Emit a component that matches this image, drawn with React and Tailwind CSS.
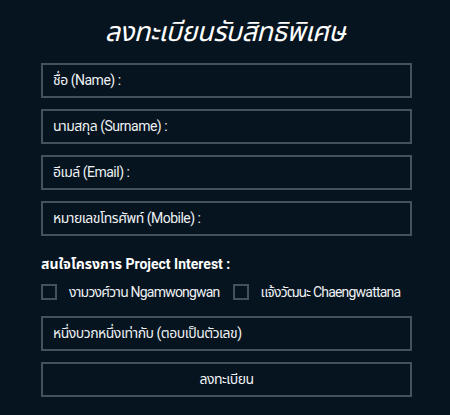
import React from 'react';

const fields = [
  'ชื่อ (Name) :',
  'นามสกุล (Surname) :',
  'อีเมล์ (Email) :',
  'หมายเลขโทรศัพท์ (Mobile) :',
];

const Box = ({ children, className = '' }) => (
  <div className={`h-[35px] border-2 border-[#43525c] flex items-center px-[10px] text-[14px] tracking-[-0.5px] text-[#eef1f3] ${className}`}>
    {children}
  </div>
);

const Check = ({ label }) => (
  <label className="flex items-center whitespace-nowrap shrink-0">
    <span className="w-4 h-4 border-2 border-[#43525c]" />
    <span className="ml-3 text-[14px] tracking-[-0.8px] text-[#eef1f3]">{label}</span>
  </label>
);

export default function App() {
  return (
    <div
      className="w-[450px] h-[415px] bg-[#061420] overflow-hidden"
      style={{ fontFamily: 'Roboto, "Noto Sans Thai", "Noto Sans", sans-serif' }}
    >
      <h1 className="pt-[14px] h-[63px] text-center text-[27px] italic text-white leading-[36px] tracking-[-0.5px]">
        ลงทะเบียนรับสิทธิพิเศษ
      </h1>
      <div className="ml-[41px] w-[371px] flex flex-col">
        <div className="flex flex-col gap-[11px]">
          {fields.map((f) => (
            <Box key={f}>{f}</Box>
          ))}
        </div>
        <div className="mt-[18px] text-[14px] font-bold text-white leading-5">
          สนใจโครงการ Project Interest :
        </div>
        <div className="mt-[10px] flex items-center gap-[13px] h-4">
          <Check label="งามวงศ์วาน Ngamwongwan" />
          <Check label="แจ้งวัฒนะ Chaengwattana" />
        </div>
        <Box className="mt-[16px]">หนึ่งบวกหนึ่งเท่ากับ (ตอบเป็นตัวเลข)</Box>
        <Box className="mt-[11px] justify-center">ลงทะเบียน</Box>
      </div>
    </div>
  );
}
